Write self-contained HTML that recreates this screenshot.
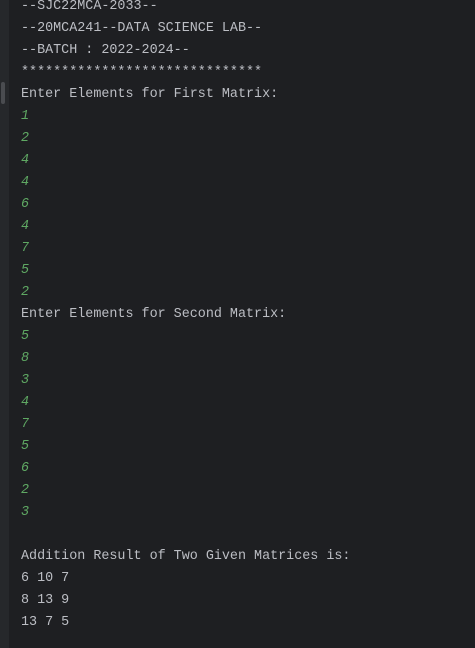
<!DOCTYPE html>
<html><head><style>
html,body{margin:0;padding:0;width:475px;height:648px;overflow:hidden;background:#1e1f22;}
.g{position:absolute;left:0;top:0;width:9px;height:648px;background:#26282b;}
.sb{position:absolute;left:1px;top:82px;width:4px;height:22px;background:#4a4c50;border-radius:2px;}
pre{position:absolute;left:21px;top:-4px;margin:0;font-family:"Liberation Mono",monospace;font-size:13.4px;line-height:22px;color:#bcbec4;}
i{color:#5fa863;}
</style></head><body>
<div class="g"></div><div class="sb"></div>
<pre>--SJC22MCA-2033--
--20MCA241--DATA SCIENCE LAB--
--BATCH : 2022-2024--
******************************
Enter Elements for First Matrix:
<i>1</i>
<i>2</i>
<i>4</i>
<i>4</i>
<i>6</i>
<i>4</i>
<i>7</i>
<i>5</i>
<i>2</i>
Enter Elements for Second Matrix:
<i>5</i>
<i>8</i>
<i>3</i>
<i>4</i>
<i>7</i>
<i>5</i>
<i>6</i>
<i>2</i>
<i>3</i>

Addition Result of Two Given Matrices is:
6 10 7
8 13 9
13 7 5</pre>
</body></html>
